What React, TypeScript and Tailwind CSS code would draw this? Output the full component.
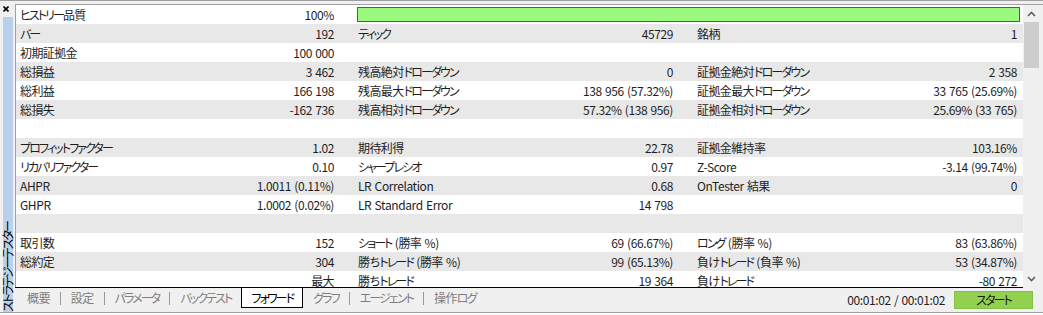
import React from 'react';

type Cell = { l: string; v: string } | null;

const rows: (Cell[] | 'bar' | 'blank')[] = [
  'bar',
  [{ l: 'バー', v: '192' }, { l: 'ティック', v: '45729' }, { l: '銘柄', v: '1' }],
  [{ l: '初期証拠金', v: '100 000' }, null, null],
  [{ l: '総損益', v: '3 462' }, { l: '残高絶対ドローダウン', v: '0' }, { l: '証拠金絶対ドローダウン', v: '2 358' }],
  [{ l: '総利益', v: '166 198' }, { l: '残高最大ドローダウン', v: '138 956 (57.32%)' }, { l: '証拠金最大ドローダウン', v: '33 765 (25.69%)' }],
  [{ l: '総損失', v: '-162 736' }, { l: '残高相対ドローダウン', v: '57.32% (138 956)' }, { l: '証拠金相対ドローダウン', v: '25.69% (33 765)' }],
  'blank',
  [{ l: 'プロフィットファクター', v: '1.02' }, { l: '期待利得', v: '22.78' }, { l: '証拠金維持率', v: '103.16%' }],
  [{ l: 'リカバリファクター', v: '0.10' }, { l: 'シャープレシオ', v: '0.97' }, { l: 'Z-Score', v: '-3.14 (99.74%)' }],
  [{ l: 'AHPR', v: '1.0011 (0.11%)' }, { l: 'LR Correlation', v: '0.68' }, { l: 'OnTester 結果', v: '0' }],
  [{ l: 'GHPR', v: '1.0002 (0.02%)' }, { l: 'LR Standard Error', v: '14 798' }, null],
  'blank',
  [{ l: '取引数', v: '152' }, { l: 'ショート (勝率 %)', v: '69 (66.67%)' }, { l: 'ロング (勝率 %)', v: '83 (63.86%)' }],
  [{ l: '総約定', v: '304' }, { l: '勝ちトレード (勝率 %)', v: '99 (65.13%)' }, { l: '負けトレード (負率 %)', v: '53 (34.87%)' }],
  [{ l: '', v: '最大' }, { l: '勝ちトレード', v: '19 364' }, { l: '負けトレード', v: '-80 272' }],
];

const colCls = [
  'w-[338px] pl-[4px] pr-[20px]',
  'w-[339px] pl-[4px] pr-[20px]',
  'w-[330px] pl-[4px] pr-[6px]',
];

const tabs = ['概要', '設定', 'パラメータ', 'バックテスト', 'フォワード', 'グラフ', 'エージェント', '操作ログ'];
const active = 4;

// kana in the original UI font are much narrower than Noto's, so tighten them
const J = ({ t }: { t: string }) => (
  <>
    {t.split(/([\u30A0-\u30FF]+|[\u3040-\u309F\u4E00-\u9FFF]+)/).map((s, i) =>
      !s ? null : /[\u30A0-\u30FF]/.test(s) ? (
        <span key={i} className="tracking-[-1.9px]">{s}</span>
      ) : /[\u3040-\u309F\u4E00-\u9FFF]/.test(s) ? (
        <span key={i} className="tracking-[-0.6px]">{s}</span>
      ) : (
        <span key={i}>{s}</span>
      )
    )}
  </>
);

const Chevron = ({ up }: { up?: boolean }) => (
  <svg width="9" height="6" viewBox="0 0 9 6">
    <path d={up ? 'M1 5 L4.5 1.5 L8 5' : 'M1 1 L4.5 4.5 L8 1'} fill="none" stroke="#606060" strokeWidth="1.6" />
  </svg>
);

export default function App() {
  return (
    <div className="w-[1043px] h-[315px] bg-white overflow-hidden font-['Noto_Sans_CJK_JP',sans-serif] [font-feature-settings:'palt'] text-[12px] leading-none tracking-[-0.4px] [word-spacing:1px] text-[#1e1e1e]">
      <div className="h-[313px] bg-[#f0f0f0] border-t border-b border-[#a0a0a0] flex">
        {/* side strip */}
        <div className="w-[15px] flex flex-col">
          <div className="h-[16px] flex items-center pl-[3px]">
            <svg width="6" height="6" viewBox="0 0 6 6">
              <path d="M0.5 0.5 L5.5 5.5 M5.5 0.5 L0.5 5.5" stroke="#000" strokeWidth="1.6" />
            </svg>
          </div>
          <div className="ml-[3px] w-[10px] flex-1 bg-[#b9d1ea] flex flex-col justify-end items-center">
            <span className="[writing-mode:vertical-rl] [text-orientation:sideways] rotate-180 whitespace-nowrap text-[12px] leading-[10px] text-black">
              <J t="ストラテジーテスター" />
            </span>
          </div>
        </div>

        {/* main */}
        <div className="flex-1 flex flex-col pt-[3px]">
          <div className="flex-1 border-t border-l border-[#a0a0a0] flex overflow-hidden bg-white">
            <div className="w-[1007px] flex flex-col">
              {rows.map((r, i) => (
                <div key={i} className={`h-[19px] shrink-0 flex items-center ${i % 2 === 1 ? 'bg-[#e8e8e8]' : 'bg-white'}`}>
                  {r === 'bar' ? (
                    <>
                      <div className={`${colCls[0]} flex justify-between`}>
                        <span><J t="ヒストリー品質" /></span>
                        <span>100%</span>
                      </div>
                      <div className="flex-1 pl-[3px] pr-[3px]">
                        <div className="h-[15px] bg-[#9afa7f] border border-[#5a5a5a]" />
                      </div>
                    </>
                  ) : r === 'blank' ? null : (
                    r.map((c, j) => (
                      <div key={j} className={`${colCls[j]} flex justify-between whitespace-nowrap`}>
                        <span>{c && <J t={c.l} />}</span>
                        <span>{c && <J t={c.v} />}</span>
                      </div>
                    ))
                  )}
                </div>
              ))}
            </div>
            {/* scrollbar */}
            <div className="w-[17px] bg-[#f0f0f0] flex flex-col">
              <div className="h-[17px] flex items-center justify-center"><Chevron up /></div>
              <div className="mx-[1px] h-[46px] bg-[#cdcdcd]" />
              <div className="flex-1" />
              <div className="h-[17px] flex items-center justify-center"><Chevron /></div>
            </div>
            <div className="w-[3px] bg-[#f0f0f0]" />
          </div>

          {/* tab bar */}
          <div className="h-[25px] flex flex-col">
            <div className="w-[1008px] h-px bg-black" />
            <div className="flex-1 flex items-start">
              <div className="pl-[2px] flex items-center h-[20px]">
                {tabs.map((t, i) => (
                  <React.Fragment key={t}>
                    {i > 0 && i !== active && i - 1 !== active && (
                      <div className="w-px h-[13px] bg-[#9a9a9a]" />
                    )}
                    <div
                      className={`h-[20px] flex items-center ${
                        i === active ? 'bg-white border-l border-r border-b border-black text-black px-[9px]' : 'text-[#7e7e7e] px-[10px]'
                      }`}
                    >
                      <J t={t} />
                    </div>
                  </React.Fragment>
                ))}
              </div>
              <div className="ml-auto flex items-center h-[22px] mt-[1px] pr-[10px]">
                <span className="mr-[9px] text-[#222]">00:01:02 / 00:01:02</span>
                <div className="w-[79px] h-[18px] bg-[#92d050] border border-[#84c043] flex items-center justify-center text-[#1a1a1a]">
                  <J t="スタート" />
                </div>
              </div>
            </div>
          </div>
        </div>
      </div>
    </div>
  );
}
